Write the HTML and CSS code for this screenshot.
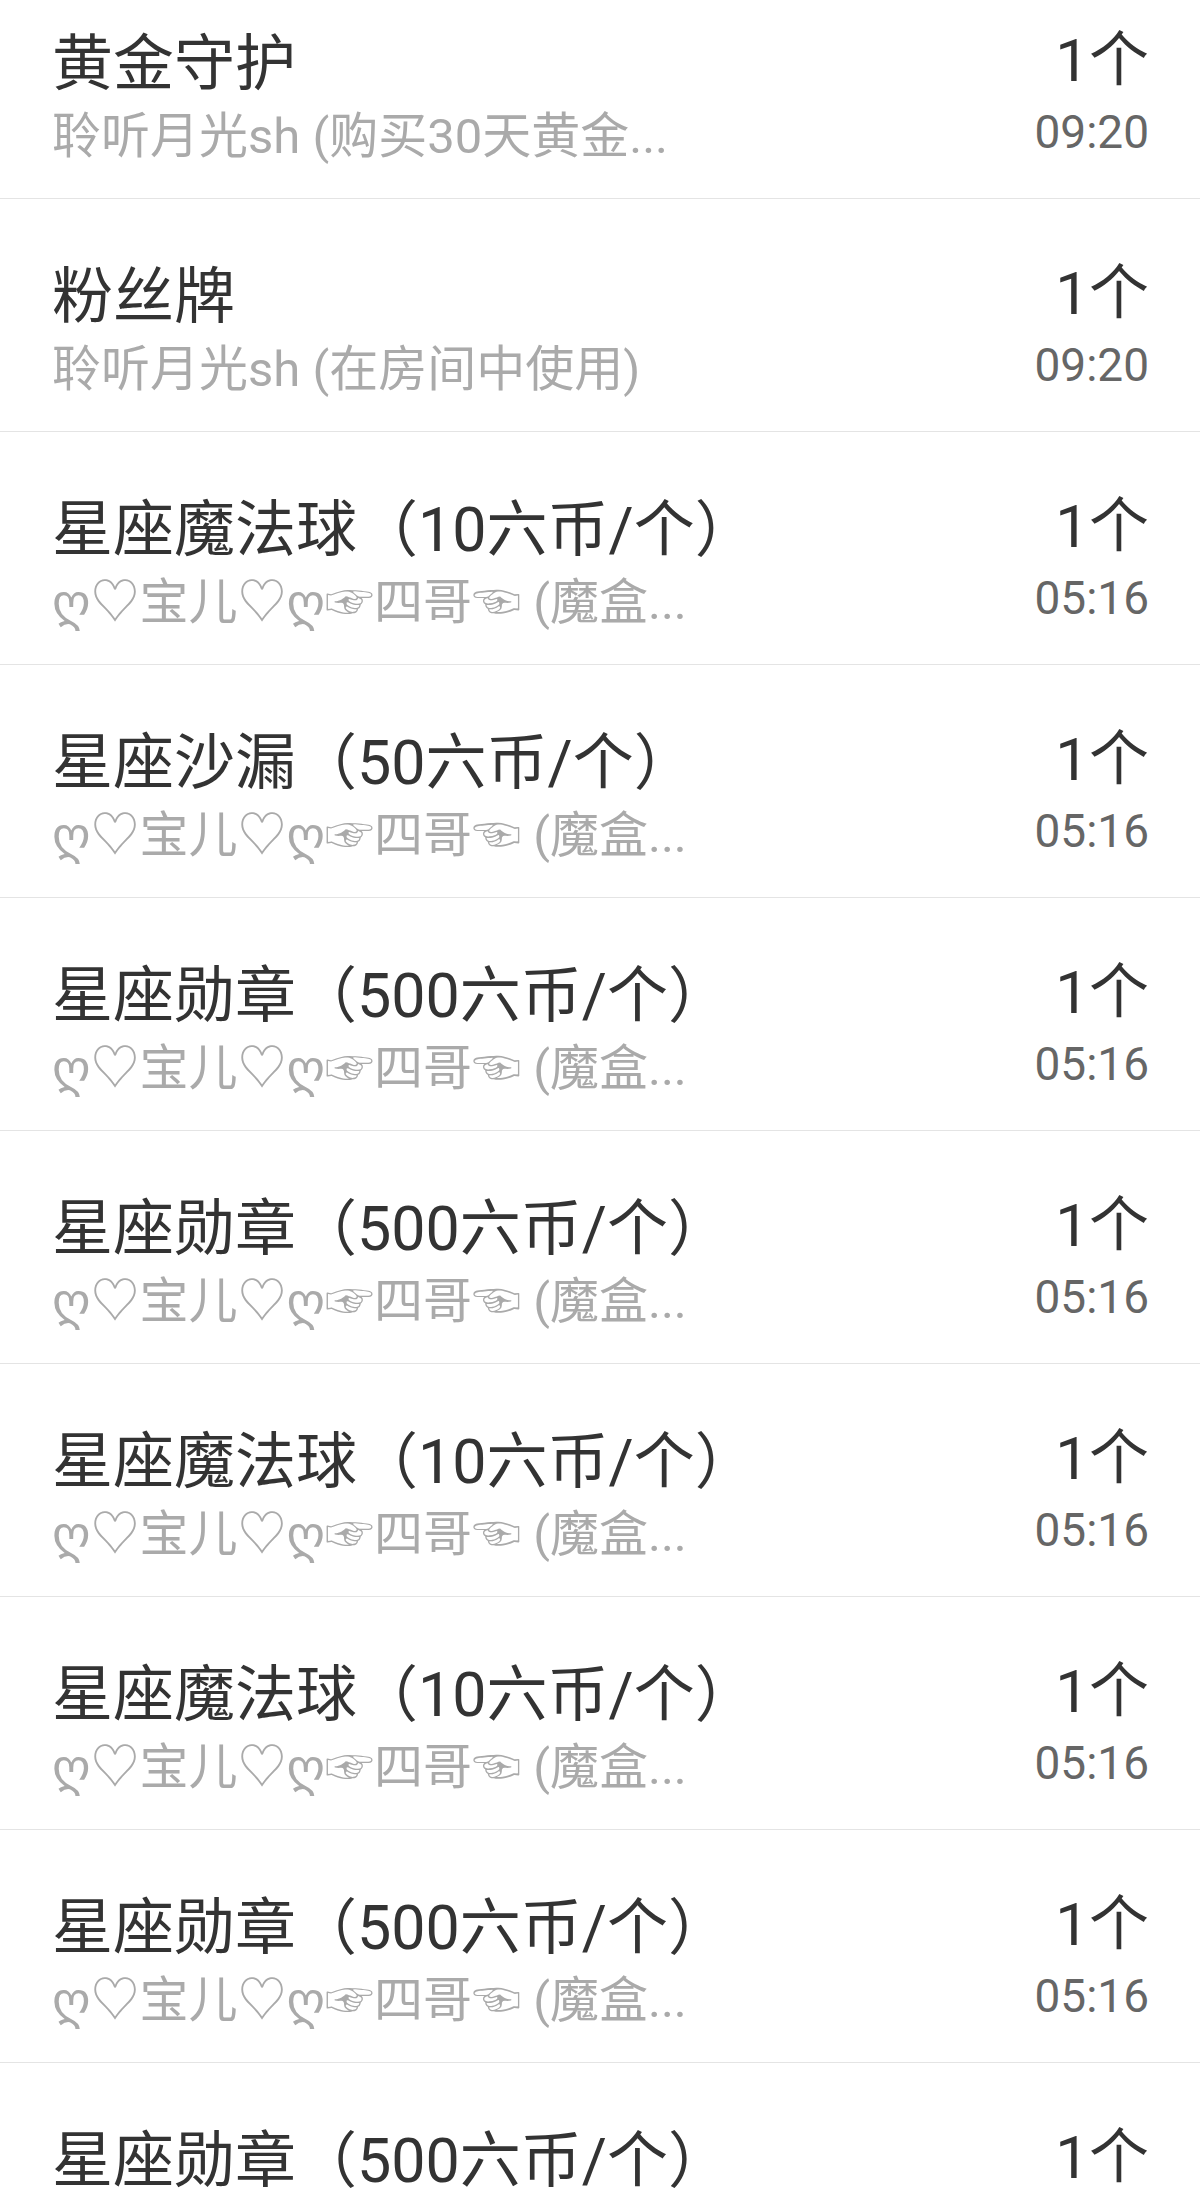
FILE: index.html
```html
<!DOCTYPE html>
<html lang="zh-CN">
<head>
  <meta charset="UTF-8" />
  <meta name="viewport" content="width=device-width, initial-scale=1.0" />
  <title>礼物记录</title>
  <link rel="stylesheet" href="styles.css">
</head>
<body>
  <ul class="gift-list">
    <li class="gift-row">
      <div class="gift-info">
        <div class="gift-name">黄金守护</div>
        <div class="gift-from">聆听月光sh (购买30天黄金...</div>
      </div>
      <div class="gift-meta">
        <div class="gift-count">1个</div>
        <div class="gift-time">09:20</div>
      </div>
    </li>
    <li class="gift-row">
      <div class="gift-info">
        <div class="gift-name">粉丝牌</div>
        <div class="gift-from">聆听月光sh (在房间中使用)</div>
      </div>
      <div class="gift-meta">
        <div class="gift-count">1个</div>
        <div class="gift-time">09:20</div>
      </div>
    </li>
    <li class="gift-row">
      <div class="gift-info">
        <div class="gift-name">星座魔法球（10六币/个）</div>
        <div class="gift-from">ღ♡宝儿♡ღ☞四哥☜ (魔盒...</div>
      </div>
      <div class="gift-meta">
        <div class="gift-count">1个</div>
        <div class="gift-time">05:16</div>
      </div>
    </li>
    <li class="gift-row">
      <div class="gift-info">
        <div class="gift-name">星座沙漏（50六币/个）</div>
        <div class="gift-from">ღ♡宝儿♡ღ☞四哥☜ (魔盒...</div>
      </div>
      <div class="gift-meta">
        <div class="gift-count">1个</div>
        <div class="gift-time">05:16</div>
      </div>
    </li>
    <li class="gift-row">
      <div class="gift-info">
        <div class="gift-name">星座勋章（500六币/个）</div>
        <div class="gift-from">ღ♡宝儿♡ღ☞四哥☜ (魔盒...</div>
      </div>
      <div class="gift-meta">
        <div class="gift-count">1个</div>
        <div class="gift-time">05:16</div>
      </div>
    </li>
    <li class="gift-row">
      <div class="gift-info">
        <div class="gift-name">星座勋章（500六币/个）</div>
        <div class="gift-from">ღ♡宝儿♡ღ☞四哥☜ (魔盒...</div>
      </div>
      <div class="gift-meta">
        <div class="gift-count">1个</div>
        <div class="gift-time">05:16</div>
      </div>
    </li>
    <li class="gift-row">
      <div class="gift-info">
        <div class="gift-name">星座魔法球（10六币/个）</div>
        <div class="gift-from">ღ♡宝儿♡ღ☞四哥☜ (魔盒...</div>
      </div>
      <div class="gift-meta">
        <div class="gift-count">1个</div>
        <div class="gift-time">05:16</div>
      </div>
    </li>
    <li class="gift-row">
      <div class="gift-info">
        <div class="gift-name">星座魔法球（10六币/个）</div>
        <div class="gift-from">ღ♡宝儿♡ღ☞四哥☜ (魔盒...</div>
      </div>
      <div class="gift-meta">
        <div class="gift-count">1个</div>
        <div class="gift-time">05:16</div>
      </div>
    </li>
    <li class="gift-row">
      <div class="gift-info">
        <div class="gift-name">星座勋章（500六币/个）</div>
        <div class="gift-from">ღ♡宝儿♡ღ☞四哥☜ (魔盒...</div>
      </div>
      <div class="gift-meta">
        <div class="gift-count">1个</div>
        <div class="gift-time">05:16</div>
      </div>
    </li>
    <li class="gift-row">
      <div class="gift-info">
        <div class="gift-name">星座勋章（500六币/个）</div>
        <div class="gift-from">ღ♡宝儿♡ღ☞四哥☜ (魔盒...</div>
      </div>
      <div class="gift-meta">
        <div class="gift-count">1个</div>
        <div class="gift-time">05:16</div>
      </div>
    </li>
  </ul>
</body>
</html>
```

FILE: styles.css
```css
body {
  margin: 0;
  background-color: #fff;
  font-family: Roboto, "Noto Sans CJK SC", "DejaVu Sans", sans-serif;
  overflow: hidden;
}
.gift-list {
  list-style: none;
  margin: -34px 0 0;
  padding: 0;
}
.gift-row {
  display: flex;
  justify-content: space-between;
  align-items: flex-start;
  height: 233px;
  padding: 58px 51px 0 52px;
  box-sizing: border-box;
  border-bottom: 1px solid #e4e4e4;
}
.gift-name {
  font-size: 61px;
  line-height: 80px;
  color: #333;
  white-space: nowrap;
}
.gift-from {
  font-size: 49px;
  line-height: 66px;
  color: #aaa;
  white-space: nowrap;
}
.gift-meta {
  margin-top: -3px;
  text-align: right;
}
.gift-count {
  font-size: 60px;
  line-height: 80px;
  color: #333;
}
.gift-time {
  font-size: 46px;
  line-height: 62px;
  color: #666;
}
```
